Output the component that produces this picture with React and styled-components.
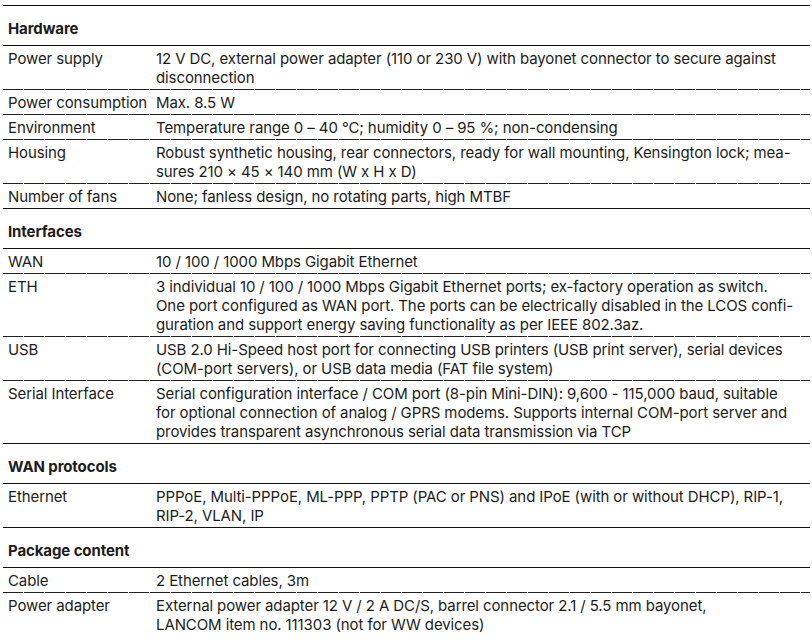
import styled, { createGlobalStyle } from "styled-components";

const GlobalStyle = createGlobalStyle`
  body {
    margin: 0;
    background: #fff;
    font-family: Inter, "Liberation Sans", sans-serif;
    color: #1c1c1c;
  }
`;

const specs = [
  {
    title: "Hardware",
    rows: [
      ["Power supply", ["12 V DC, external power adapter (110 or 230 V) with bayonet connector to secure against", "disconnection"]],
      ["Power consumption", ["Max. 8.5 W"]],
      ["Environment", ["Temperature range 0 – 40 °C; humidity 0 – 95 %; non-condensing"]],
      ["Housing", ["Robust synthetic housing, rear connectors, ready for wall mounting, Kensington lock; mea-", "sures 210 × 45 × 140 mm (W x H x D)"]],
      ["Number of fans", ["None; fanless design, no rotating parts, high MTBF"]],
    ],
  },
  {
    title: "Interfaces",
    rows: [
      ["WAN", ["10 / 100 / 1000 Mbps Gigabit Ethernet"]],
      ["ETH", [
        "3 individual 10 / 100 / 1000 Mbps Gigabit Ethernet ports; ex-factory operation as switch.",
        "One port configured as WAN port. The ports can be electrically disabled in the LCOS confi-",
        "guration and support energy saving functionality as per IEEE 802.3az.",
      ]],
      ["USB", ["USB 2.0 Hi-Speed host port for connecting USB printers (USB print server), serial devices", "(COM-port servers), or USB data media (FAT file system)"]],
      ["Serial Interface", [
        "Serial configuration interface / COM port (8-pin Mini-DIN): 9,600 - 115,000 baud, suitable",
        "for optional connection of analog / GPRS modems. Supports internal COM-port server and",
        "provides transparent asynchronous serial data transmission via TCP",
      ]],
    ],
  },
  {
    title: "WAN protocols",
    rows: [
      ["Ethernet", ["PPPoE, Multi-PPPoE, ML-PPP, PPTP (PAC or PNS) and IPoE (with or without DHCP), RIP-1,", "RIP-2, VLAN, IP"]],
    ],
  },
  {
    title: "Package content",
    rows: [
      ["Cable", ["2 Ethernet cables, 3m"]],
      ["Power adapter", ["External power adapter 12 V / 2 A DC/S, barrel connector 2.1 / 5.5 mm bayonet,", "LANCOM item no. 111303 (not for WW devices)"]],
    ],
  },
];

export default function App() {
  return (
    <>
      <GlobalStyle />
      <Sheet>
        {specs.map((section, si) => (
          <Section key={section.title} $last={si === specs.length - 1}>
            <SectionTitle>{section.title}</SectionTitle>
            {section.rows.map(([label, lines], ri) => (
              <Row key={label} $last={ri === section.rows.length - 1}>
                <Label>{label}</Label>
                <Value>
                  {lines.map((l) => (
                    <Line key={l}>{l}</Line>
                  ))}
                </Value>
              </Row>
            ))}
          </Section>
        ))}
      </Sheet>
    </>
  );
}

const Sheet = styled.div`
  margin: 5px 2px 0 3px;
  border-top: 1.5px solid #111;
  font-size: 15px;
  letter-spacing: -0.1px;
`;

const Section = styled.section`
  border-bottom: ${({ $last }) => ($last ? "none" : "1.5px solid #111")};
`;

const SectionTitle = styled.h3`
  margin: 0;
  padding: 13px 5px 7px;
  font-size: 15px;
  font-weight: 700;
  line-height: 19px;
  border-bottom: 1.5px solid #111;
`;

const Row = styled.div`
  display: grid;
  grid-template-columns: 148px 1fr;
  padding: 3px 0 2px;
  line-height: 19px;
  ${({ $last }) =>
    !$last &&
    `
    background-image: repeating-linear-gradient(
      to right,
      #222 0 20px,
      transparent 20px 21px
    );
    background-size: 100% 1px;
    background-repeat: no-repeat;
    background-position: bottom left;
    padding-bottom: 3px;
  `}
`;

const Label = styled.div`
  padding-left: 5px;
  white-space: nowrap;
`;

const Value = styled.div`
  padding-left: 5px;
`;

const Line = styled.div`
  white-space: nowrap;
`;
